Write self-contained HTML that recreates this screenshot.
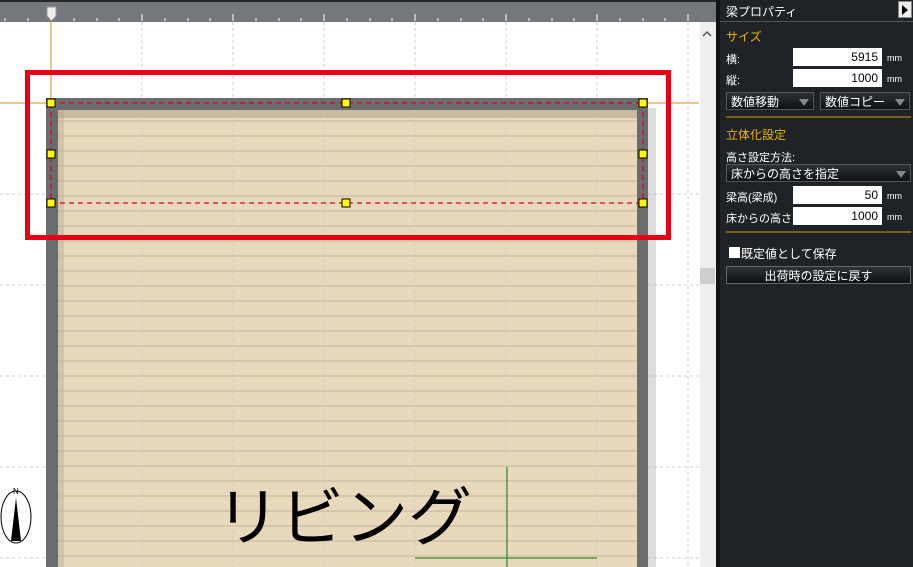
<!DOCTYPE html>
<html><head><meta charset="utf-8"><style>
*{margin:0;padding:0;box-sizing:border-box}
body{width:913px;height:567px;overflow:hidden;background:#fff;position:relative;font-family:"Liberation Sans","Noto Sans CJK JP",sans-serif}
.a{position:absolute}
#p{left:716px;top:0;width:197px;height:567px;background:#1f2327;border-left:4px solid #121417;color:#fff;font-size:11px}
.l{position:absolute;white-space:nowrap}
.y{color:#f0b400;font-size:12px}
.in{position:absolute;background:#fff;color:#000;text-align:right;padding-right:4px;height:18px;line-height:18px;font-size:12px;width:89px;left:73px}
.mm{position:absolute;left:167px;font-size:9px}
.dd{position:absolute;height:18px;line-height:18px;background:linear-gradient(#2e3236,#0e1012);border:1px solid #555;padding-left:4px;font-size:12px}
.dd:after{content:"";position:absolute;right:4px;top:6px;border-left:5px solid transparent;border-right:5px solid transparent;border-top:7px solid #888}
.nb:after{display:none}
.hr{position:absolute;left:6px;width:185px;height:2px;background:#7a5e10}
</style></head><body>
<svg class="a" style="left:0;top:0" width="716" height="567">
<rect width="716" height="567" fill="#fff"/>
<g stroke="#ccc" stroke-dasharray="3,3">
<path d="M142 22V567M233 22V567M324 22V567M415 22V567M506 22V567M597 22V567M688 22V567M0 194H700M0 285H700M0 376H700M0 467H700M0 558H700"/>
</g>
<rect x="0" y="0" width="716" height="22" fill="#74787c"/>
<rect x="0" y="0" width="716" height="2" fill="#25282b"/>
<g stroke="#fff"><path d="M142 14V21M233 14V21M324 14V21M415 14V21M506 14V21M597 14V21M688 14V21M5 18V21M28 18V21M74 18V21M97 18V21M119 18V21M165 18V21M188 18V21M210 18V21M256 18V21M279 18V21M301 18V21M347 18V21M370 18V21M392 18V21M438 18V21M461 18V21M483 18V21M529 18V21M552 18V21M574 18V21M620 18V21M643 18V21M665 18V21"/></g>
<path d="M47 7H56V16L51.5 21L47 16Z" fill="#eee" stroke="#999"/>
<path d="M51 22V103M0 103H699" stroke="#d4900a"/>
<rect x="700" y="22" width="16" height="545" fill="#eeeeee"/>
<rect x="700" y="268" width="15" height="16" fill="#cfcfcf"/>
<path d="M703 36L707 32L711 36" stroke="#555" stroke-width="1.5" fill="none"/>
<rect x="648" y="108" width="8" height="459" fill="#bbb" opacity=".5"/>
<rect x="46" y="98" width="602" height="469" fill="#6b6c70"/>
<rect x="58" y="110" width="579" height="457" fill="#e8d8bc"/>
<rect x="58" y="110" width="579" height="8" fill="#b5a68d" opacity=".6"/>
<rect x="58" y="110" width="6" height="457" fill="#b5a68d" opacity=".4"/>
<g stroke="#c3b49a"><path d="M58 121H637M58 136H637M58 151H637M58 166H637M58 181H637M58 196H637M58 211H637M58 226H637M58 241H637M58 256H637M58 271H637M58 286H637M58 301H637M58 316H637M58 331H637M58 346H637M58 361H637M58 376H637M58 391H637M58 406H637M58 421H637M58 436H637M58 451H637M58 466H637M58 481H637M58 496H637M58 511H637M58 526H637M58 541H637M58 556H637"/></g>
<g stroke="#d6ccbc" stroke-dasharray="3,3"><path d="M142 110V567M233 110V567M324 110V567M415 110V567M506 110V567M597 110V567"/></g>
<path d="M507 467V567M415 558H597" stroke="#008000"/>
<text x="216" y="540" font-size="64" font-family="Noto Sans CJK JP,sans-serif">リビング</text>
<g stroke="#e60012" stroke-dasharray="5,4" stroke-width="1.3"><path d="M51 103H643M51 203H643M51 103V203M643 103V203"/></g>
<g fill="#ffff00" stroke="#000"><rect x="47" y="99" width="8" height="8"/><rect x="342" y="99" width="8" height="8"/><rect x="639" y="99" width="8" height="8"/><rect x="47" y="150" width="8" height="8"/><rect x="639" y="150" width="8" height="8"/><rect x="47" y="199" width="8" height="8"/><rect x="342" y="199" width="8" height="8"/><rect x="639" y="199" width="8" height="8"/></g>
<rect x="27.5" y="72.5" width="641" height="165" fill="none" stroke="#e60012" stroke-width="5"/>
<ellipse cx="16" cy="517" rx="15" ry="26" fill="#fff" stroke="#000"/>
<path d="M16 498L21 541H11Z" fill="#000"/>
<text x="13" y="494" font-size="8">N</text>
</svg>
<div id="p" class="a">
<div class="l" style="left:6px;top:3px;font-size:12px">梁プロパティ</div>
<div class="a" style="left:178px;top:1px;width:14px;height:17px;background:#eee;border:1px solid #888"><div class="a" style="left:3px;top:3px;border-top:5px solid transparent;border-bottom:5px solid transparent;border-left:6px solid #000"></div></div>
<div class="a" style="left:0;top:21px;width:193px;height:1px;background:#555"></div>
<div class="l y" style="left:6px;top:28px">サイズ</div>
<div class="l" style="left:6px;top:51px">横:</div><div class="in" style="top:48px">5915</div><div class="l mm" style="top:53px">mm</div>
<div class="l" style="left:6px;top:72px">縦:</div><div class="in" style="top:69px">1000</div><div class="l mm" style="top:74px">mm</div>
<div class="dd" style="left:6px;top:92px;width:88px">数値移動</div>
<div class="dd" style="left:100px;top:92px;width:90px">数値コピー</div>
<div class="hr" style="top:116px"></div>
<div class="l y" style="left:6px;top:126px">立体化設定</div>
<div class="l" style="left:6px;top:149px">高さ設定方法:</div>
<div class="dd" style="left:6px;top:164px;width:185px">床からの高さを指定</div>
<div class="l" style="left:6px;top:189px">梁高(梁成)</div><div class="in" style="top:186px">50</div><div class="l mm" style="top:191px">mm</div>
<div class="l" style="left:6px;top:210px">床からの高さ:</div><div class="in" style="top:207px">1000</div><div class="l mm" style="top:212px">mm</div>
<div class="hr" style="top:231px"></div>
<div class="a" style="left:9px;top:247px;width:11px;height:11px;background:#fff"></div>
<div class="l" style="left:21px;top:245px;font-size:12px">既定値として保存</div>
<div class="dd nb" style="left:6px;top:266px;width:185px;text-align:center;padding:0;border-color:#666">出荷時の設定に戻す</div>
</div>
</body></html>
